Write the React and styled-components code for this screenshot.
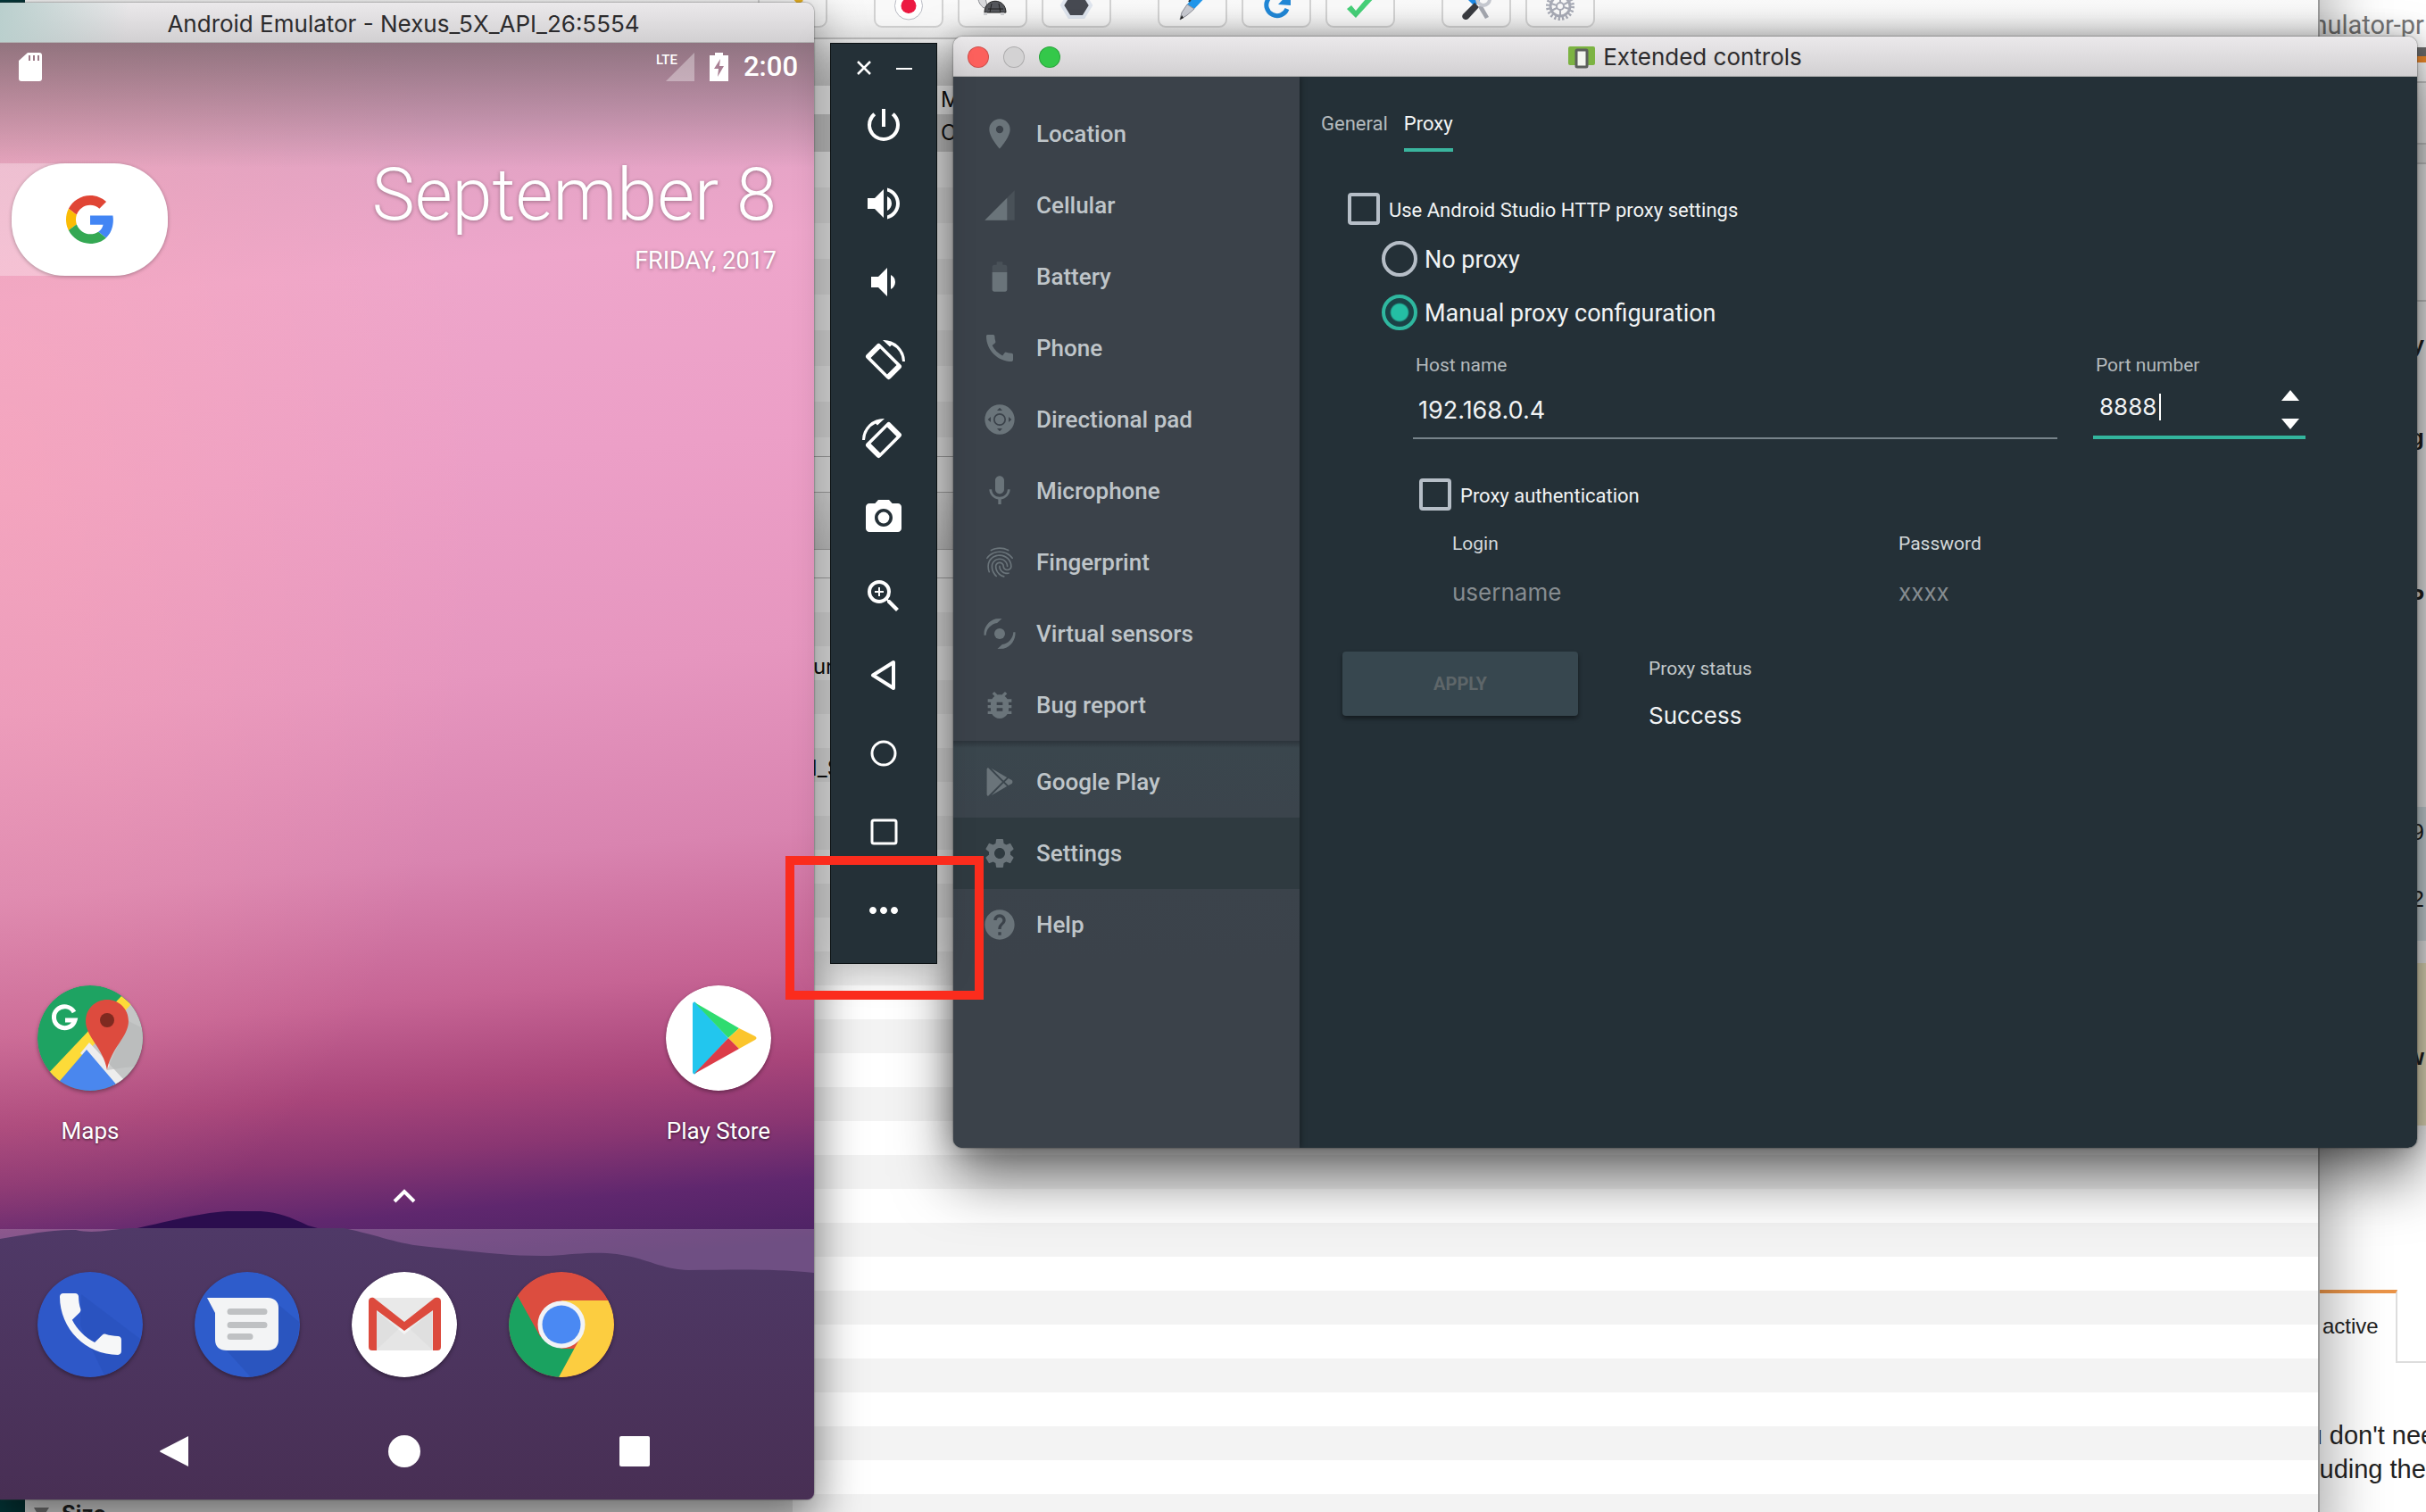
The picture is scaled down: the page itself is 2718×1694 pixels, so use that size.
import React, { useState } from 'react';
import styled, { createGlobalStyle, css } from 'styled-components';
import {
  MdPowerSettingsNew,
  MdVolumeUp,
  MdVolumeDown,
  MdPhotoCamera,
  MdZoomIn,
  MdMoreHoriz,
  MdPlace,
  MdCall,
  MdMic,
  MdFingerprint,
  MdBugReport,
  MdSettings,
  MdHelp,
} from 'react-icons/md';
import { FaGooglePlay } from 'react-icons/fa';

/* ---------- icons ---------- */

const CellularIcon = () => (
  <svg viewBox="0 0 24 24" fill="currentColor">
    <path fillOpacity=".3" d="M2 22h20V2z" />
    <path d="M17 7L2 22h15z" />
  </svg>
);

const BatteryIcon = () => (
  <svg viewBox="0 0 24 24" fill="currentColor">
    <path fillOpacity=".3" d="M17 5.33C17 4.6 16.4 4 15.67 4H14V2h-4v2H8.33C7.6 4 7 4.6 7 5.33V9h10V5.33z" />
    <path d="M7 9v11.67C7 21.4 7.6 22 8.33 22h7.33c.74 0 1.34-.6 1.34-1.33V9H7z" />
  </svg>
);

const DpadIcon = () => (
  <svg viewBox="0 0 24 24" fill="currentColor">
    <path
      fillRule="evenodd"
      d="M12 2a10 10 0 1 0 0 20 10 10 0 0 0 0-20zM12 4l1.800 2h-3.600zM12 20l-1.800-2h3.600zM4 12l2-1.800v3.600zM20 12l-2 1.800v-3.600zM12 7.800a4.200 4.200 0 1 1 0 8.400 4.200 4.200 0 0 1 0-8.400z"
    />
    <circle cx="12" cy="12" r="3.2" />
  </svg>
);

const SensorsIcon = () => (
  <svg viewBox="0 0 24 24" fill="currentColor">
    <circle cx="12" cy="12" r="3.6" />
    <path d="M1.500 13A10.500 10.500 0 0 1 9.500 2l4-.2-3.200 3A8.800 8.800 0 0 0 2.800 13z" />
    <path d="M22.500 11a10.500 10.500 0 0 1-8 11l-4 .2 3.200-3a8.800 8.800 0 0 0 7.500-8.200z" />
  </svg>
);

const RotateIcon = ({ flip }) => (
  <svg viewBox="0 0 48 48" fill="#fff">
    <g transform={flip ? 'translate(48 0) scale(-1 1)' : undefined}>
      <path
        transform="rotate(-45 24 25)"
        fillRule="evenodd"
        d="M16 6h16a3 3 0 0 1 3 3v32a3 3 0 0 1-3 3H16a3 3 0 0 1-3-3V9a3 3 0 0 1 3-3zM16.500 12v26h15V12z"
      />
      <path d="M23 1a24 24 0 0 1 25 24h-3A21 21 0 0 0 33 6.500l-2 2z" />
    </g>
  </svg>
);

const BackIcon = () => (
  <svg viewBox="0 0 48 48" fill="none" stroke="#fff" strokeWidth="4" strokeLinejoin="round">
    <path d="M35 10v29L12 24.500z" />
  </svg>
);

const HomeIcon = () => (
  <svg viewBox="0 0 48 48" fill="none" stroke="#fff" strokeWidth="3">
    <circle cx="24" cy="24" r="13" />
  </svg>
);

const OverviewIcon = () => (
  <svg viewBox="0 0 48 48" fill="none" stroke="#fff" strokeWidth="3">
    <rect x="11" y="11" width="27" height="26" rx="2" />
  </svg>
);

const GoogleLogo = () => (
  <svg width="54" height="54" viewBox="0 0 48 48">
    <path fill="#e04535" d="M24 9.500c3.540 0 6.710 1.220 9.210 3.600l6.850-6.850C35.900 2.380 30.470 0 24 0 14.620 0 6.510 5.380 2.560 13.220l7.980 6.190C12.430 13.720 17.740 9.500 24 9.500z" />
    <path fill="#4285f4" d="M46.980 24.550c0-1.570-.15-3.090-.38-4.550H24v9.020h12.940c-.58 2.960-2.260 5.480-4.780 7.180l7.730 6c4.510-4.180 7.090-10.360 7.090-17.650z" />
    <path fill="#fbbc05" d="M10.530 28.590c-.48-1.450-.76-2.990-.76-4.590s.27-3.140.76-4.590l-7.980-6.190C.92 16.460 0 20.120 0 24c0 3.880.92 7.540 2.560 10.780l7.970-6.190z" />
    <path fill="#34a853" d="M24 48c6.480 0 11.930-2.130 15.890-5.810l-7.730-6c-2.150 1.450-4.920 2.300-8.160 2.300-6.260 0-11.570-4.220-13.470-9.910l-7.980 6.190C6.510 42.620 14.620 48 24 48z" />
  </svg>
);

const MapsLogo = () => (
  <svg viewBox="0 0 118 118">
    <clipPath id="maps-clip">
      <circle cx="59" cy="59" r="59" />
    </clipPath>
    <g clipPath="url(#maps-clip)">
      <rect width="118" height="118" fill="#1ea362" />
      <path d="M118 10v108H96L54 70 98 22z" fill="#c4c6c6" />
      <path d="M94 12l11 9-85 92-12-10z" fill="#fddb38" />
      <path d="M48 76l10-12 52 56H94z" fill="#ededed" />
      <path d="M55 72l41 48H14z" fill="#4a87ee" />
      <path d="M78 95L102 40l20 10v40l-24 2z" fill="#b5b7b8" opacity=".6" />
      <path d="M78 16c13 0 24 10 24 24 0 18-20 30-24 55-4-25-24-37-24-55 0-14 11-24 24-24z" fill="#dd4b3e" />
      <circle cx="78" cy="39" r="8" fill="#7f2a20" />
      <path d="M41 30a12 12 0 1 0 1 9H31" fill="none" stroke="#fff" strokeWidth="5" />
    </g>
  </svg>
);

const PlayLogo = () => (
  <svg viewBox="0 0 118 118">
    <circle cx="59" cy="59" r="59" fill="#fff" />
    <path d="M30 21c0-2 2-3 3-2l37 40-37 40c-1 1-3 0-3-2z" fill="#22c6ee" />
    <path d="M32 19l50 29-12 11z" fill="#2fdc70" />
    <path d="M82 48l18 9c2 1 2 3 0 4L82 71 70 59z" fill="#fbc52c" />
    <path d="M32 99l50-28-12-12z" fill="#dc3c48" />
  </svg>
);

const PhoneLogo = () => (
  <svg viewBox="0 0 118 118">
    <circle cx="59" cy="59" r="59" fill="#2e58c8" />
    <path d="M49 25l66 50a59 59 0 0 1-40 41L48 60z" fill="#264db4" opacity=".4" />
    <path
      transform="translate(13.500 12.500) scale(3.830)"
      fill="#f6f7f8"
      d="M6.620 10.790c1.440 2.830 3.760 5.140 6.590 6.590l2.200-2.200c.27-.27.67-.36 1.020-.24 1.120.37 2.330.57 3.570.57.55 0 1 .45 1 1V20c0 .55-.45 1-1 1-9.390 0-17-7.610-17-17 0-.55.45-1 1-1h3.500c.55 0 1 .45 1 1 0 1.250.2 2.450.57 3.570.11.35.03.74-.25 1.020l-2.200 2.200z"
    />
  </svg>
);

const MessagesLogo = () => (
  <svg viewBox="0 0 118 118">
    <circle cx="59" cy="59" r="59" fill="#2e5ccb" />
    <path d="M93 36l24 20a59 59 0 0 1-54 62L34 86z" fill="#264db4" opacity=".5" />
    <path d="M14 29h68c8 0 12 5 12 11v36c0 7-4 12-12 12H36c-8 0-13-4-13-12V46z" fill="#f3f4f5" />
    <path d="M40 44.500h38M40 59.500h38M40 72.500h22" stroke="#bfc1c3" strokeWidth="7" strokeLinecap="round" />
  </svg>
);

const GmailLogo = () => (
  <svg viewBox="0 0 118 118">
    <circle cx="59" cy="59" r="59" fill="#fff" />
    <rect x="19" y="29" width="81" height="59" rx="4" fill="#e9e9e9" />
    <path d="M27 88l32-30 32 30z" fill="#f4f4f4" />
    <path d="M28 44l31 26 31-26v44H28z" fill="#d5d5d5" opacity=".5" />
    <path d="M19 33c0-5 5-5 7-3l33 26 33-26c2-2 8-2 8 3v51c0 3-2 4-4 4h-5V43L59 66 28 43v45h-5c-2 0-4-1-4-4z" fill="#dc4a3d" />
  </svg>
);

const ChromeLogo = () => (
  <svg viewBox="0 0 118 118">
    <clipPath id="chrome-clip">
      <circle cx="59" cy="59" r="59" />
    </clipPath>
    <g clipPath="url(#chrome-clip)">
      <rect width="118" height="118" fill="#dc4d3f" />
      <path d="M0 10l10 17 25 45 24 14 18 0-21 36H0z" fill="#1aa260" />
      <path d="M59 32h59v86H56l25-46z" fill="#fccd40" />
    </g>
    <circle cx="59" cy="59" r="26.500" fill="#f1f3f6" />
    <circle cx="59" cy="59" r="21.500" fill="#4a89f3" />
  </svg>
);

const SdIcon = () => (
  <svg width="26" height="32" viewBox="0 0 26 32">
    <path d="M10 0h13a3 3 0 0 1 3 3v26a3 3 0 0 1-3 3H3a3 3 0 0 1-3-3V9z" fill="#fff" />
    <path d="M12 3v6M17 3v6M22 3v6" stroke="#9d7b88" strokeWidth="2" />
  </svg>
);

const SignalIcon = () => (
  <svg width="32" height="32" viewBox="0 0 32 32">
    <path d="M0 32L32 0v32z" fill="#fff" fillOpacity=".35" />
  </svg>
);

const ChargeIcon = () => (
  <svg width="21" height="32" viewBox="0 0 21 32">
    <path d="M6 0h9v3h6v29H0V3h6z" fill="#fff" />
    <path d="M12 7L5 18h5l-1 9 7-12h-5z" fill="#a98094" />
  </svg>
);

const Ridge = () => (
  <svg width="100%" height="323" viewBox="0 0 912 323" preserveAspectRatio="none">
    <defs>
      <linearGradient id="ridge" x1="0" y1="0" x2="0" y2="1">
        <stop offset="0" stopColor="#4f3967" />
        <stop offset=".5" stopColor="#4c345e" />
        <stop offset="1" stopColor="#482f54" />
      </linearGradient>
    </defs>
    <path d="M130 24C180 14 220 2 255 0c50-2 60 2 90 16l50 14z" fill="#2b0d4e" />
    <path d="M0 20h912v303H0z" fill="#fff" fillOpacity=".2" />
    <path
      d="M0 31C30 26 60 20 85 21c20 5 40-1 60-2h240c40 8 60 18 96 21 50 5 90 11 135 10 30-2 50-5 75-2 35 5 50 17 80 18 50 0 90-2 141 3v254H0z"
      fill="url(#ridge)"
    />
  </svg>
);

const toolbarDrawings = {
  broom: (
    <path d="M16 0l16 16-6 4L12 4z" fill="#e8b020" />
  ),
  record: (
    <>
      <circle cx="20" cy="21.500" r="15.500" fill="#fff" stroke="#b9bbc4" />
      <circle cx="20" cy="21.500" r="8.500" fill="#ec1941" />
    </>
  ),
  turtle: (
    <>
      <path d="M4 13c0-4 8-4 8 0l2 9-4 2c-3-3-6-6-6-11z" fill="#d9dadd" stroke="#8b8d92" />
      <path d="M11 29c0-17 24-17 24 0z" fill="#55575c" stroke="#222" />
      <path d="M15 25h17M19 19l-2 10M27 19l2 10" stroke="#222" />
      <path d="M12 29v3M31 29v3" stroke="#cfd0d3" strokeWidth="4" />
    </>
  ),
  hexagon: (
    <path d="M12 9h16l8 13-8 13H12L4 22z" transform="translate(0 -1)" fill="#474a52" stroke="#dfe5ee" strokeWidth="4" />
  ),
  pen: (
    <>
      <path d="M30 0l10 6-18 19-8-5z" fill="#2196ea" />
      <path d="M14 20l8 5-8 7-8 5 2-8z" fill="#c9cbd2" stroke="#8d8f98" />
      <path d="M6 37l2-5 2 3z" fill="#222" />
      <path d="M16 17l8-11" stroke="#333" strokeWidth="2" />
    </>
  ),
  refresh: (
    <>
      <path d="M28 12a12 12 0 1 0 4 14" fill="none" stroke="#2187d6" strokeWidth="5" transform="translate(0 -1)" />
      <path d="M22 20l14 1V5z" fill="#2187d6" />
    </>
  ),
  check: (
    <path d="M5 25l5-4 5 6L32 7l5 4-22 24z" fill="#46cf78" />
  ),
  tools: (
    <>
      <path d="M6 2l8 2 10 12-6 6L6 10z" fill="#1d8ae8" />
      <path d="M18 18l5 5-12 13c-3 3-9-1-6-5z" fill="#3a3c41" />
      <path d="M26 20l8 14-4 2-8-13z" fill="#a5a8b0" />
      <circle cx="28" cy="14" r="7" fill="none" stroke="#c5c8cf" strokeWidth="4" />
    </>
  ),
  gear: (
    <g fill="none" stroke="#a8abb6">
      <circle cx="20" cy="22" r="14" strokeWidth="4" strokeDasharray="2.200 2.200" />
      <circle cx="20" cy="22" r="11" strokeWidth="3" />
      <circle cx="20" cy="22" r="4" strokeWidth="2" />
      <path d="M20 12v6M20 26v6M10 19l6 2M24 23l6 2M30 17l-6 3M10 27l6-3" strokeWidth="2" />
    </g>
  ),
};

/* ---------- data ---------- */

const proxyToolGroups = [
  [['Clear', 'broom']],
  [['Record', 'record'], ['Throttle', 'turtle'], ['Breakpoints', 'hexagon']],
  [['Compose', 'pen'], ['Repeat', 'refresh'], ['Validate', 'check']],
  [['Tools', 'tools'], ['Preferences', 'gear']],
];

const emulatorTools = [
  ['Power', <MdPowerSettingsNew />],
  ['Volume up', <MdVolumeUp />],
  ['Volume down', <MdVolumeDown />],
  ['Rotate left', <RotateIcon />],
  ['Rotate right', <RotateIcon flip />],
  ['Take screenshot', <MdPhotoCamera />],
  ['Zoom', <MdZoomIn />],
  ['Back', <BackIcon />],
  ['Home', <HomeIcon />],
  ['Overview', <OverviewIcon />],
  ['More', <MdMoreHoriz />],
];

const deviceSections = [
  ['Location', <MdPlace />],
  ['Cellular', <CellularIcon />],
  ['Battery', <BatteryIcon />],
  ['Phone', <MdCall />],
  ['Directional pad', <DpadIcon />],
  ['Microphone', <MdMic />],
  ['Fingerprint', <MdFingerprint />],
  ['Virtual sensors', <SensorsIcon />],
  ['Bug report', <MdBugReport />],
];

const appSections = [
  ['Google Play', <FaGooglePlay />],
  ['Settings', <MdSettings />],
  ['Help', <MdHelp />],
];

const dockApps = [
  ['Phone', <PhoneLogo />],
  ['Messages', <MessagesLogo />],
  ['Gmail', <GmailLogo />],
  ['Chrome', <ChromeLogo />],
];

/* ---------- windows ---------- */

const BrowserWindow = () => (
  <Browser>
    <BrowserTitle>mulator-pr</BrowserTitle>
    <BrowserBand h={10} color="#6b6b6b" />
    <BrowserBand h={7} color="#f08a2c" />
    <BrowserBand h={23} color="#fff" line />
    <BrowserBand h={69} color="#f4f4f4" line />
    <BrowserBand h={22} color="#e8e8e8" line />
    <BrowserBand h={154} color="#f6f6f6" line />
    <BrowserBand h={96} color="#f6f6f6"><b>y</b></BrowserBand>
    <BrowserBand h={112} color="#f6f6f6"><b>ng</b></BrowserBand>
    <BrowserBand h={246} color="#f6f6f6"><b>P</b></BrowserBand>
    <BrowserBand h={112} color="#f6f6f6" />
    <BrowserBand h={56} color="#d3dfe3">9</BrowserBand>
    <BrowserBand h={94} color="#d3dfe3">2</BrowserBand>
    <BrowserBand h={25} color="#f6f6f6" />
    <BrowserBand h={28} color="#efe7c4" />
    <BrowserBand h={154} color="#efe7c4"><b>w</b></BrowserBand>
    <BrowserBand h={184} color="#fff" />
    <TabStrip>
      <BrowserTab href="#active">active</BrowserTab>
      <TabRest />
    </TabStrip>
    <Answer>
      you don&apos;t nee
      <br />
      including the
    </Answer>
  </Browser>
);

const ProxyWindow = () => (
  <Charles>
    <CharlesToolbar>
      {proxyToolGroups.map(group => (
        <ToolGroup key={group[0][0]}>
          {group.map(([name, icon]) => (
            <ToolButton key={name} type="button" aria-label={name}>
              <svg width="40" height="40" viewBox="0 0 40 40">
                {toolbarDrawings[icon]}
              </svg>
            </ToolButton>
          ))}
        </ToolGroup>
      ))}
    </CharlesToolbar>
    <CharlesBody>
      <Details>
        <DetailRow>
          <svg width="17" height="14" viewBox="0 0 17 14">
            <path d="M0 0h17L8 14z" fill="#777" />
          </svg>
          Size
        </DetailRow>
      </Details>
      <Sessions>
        <PaneHeader h={52} />
        <PaneRow h={32} inset>M</PaneRow>
        <PaneRow h={42} inset selected>C</PaneRow>
        <Stripes h={341} period={80} />
        <PaneRow h={41} lined />
        <PaneHeader h={63} />
        <PaneRow h={33} lined />
        <Stripes grow period={76}>
          <StripeText top={80} left={16}>.ur</StripeText>
          <StripeText top={76} left={6}>M_S</StripeText>
        </Stripes>
      </Sessions>
    </CharlesBody>
  </Charles>
);

const PhoneWindow = () => (
  <Phone>
    <PhoneTitle>Android Emulator - Nexus_5X_API_26:5554</PhoneTitle>
    <Screen>
      <Wallpaper><Ridge /></Wallpaper>
      <StatusBar>
        <SdIcon />
        <StatusRight>
          <Network>
            <span>LTE</span>
            <SignalIcon />
          </Network>
          <ChargeIcon />
          <Clock>2:00</Clock>
        </StatusRight>
      </StatusBar>
      <HomeHeader>
        <SearchTray>
          <SearchPill type="button" aria-label="Google search"><GoogleLogo /></SearchPill>
        </SearchTray>
        <DateBlock>
          <DateText>September 8</DateText>
          <DayText>FRIDAY, 2017</DayText>
        </DateBlock>
      </HomeHeader>
      <AppGrid>
        <App type="button">
          <MapsLogo />
          Maps
        </App>
        <App type="button" last>
          <PlayLogo />
          Play Store
        </App>
      </AppGrid>
      <Drawer type="button" aria-label="All apps">
        <svg width="26" height="16" viewBox="0 0 26 16">
          <path d="M2 14L13 3l11 11" fill="none" stroke="#fff" strokeWidth="4" />
        </svg>
      </Drawer>
      <AppGrid>
        {dockApps.map(([name, logo]) => (
          <App key={name} type="button" aria-label={name}>{logo}</App>
        ))}
      </AppGrid>
      <NavBar>
        <NavButton type="button" aria-label="Back">
          <svg width="36" height="38" viewBox="0 0 36 38">
            <path d="M34 2v34L3 20q-2-1 0-2z" fill="#fff" />
          </svg>
        </NavButton>
        <NavButton type="button" aria-label="Home">
          <svg width="36" height="38" viewBox="0 0 36 38">
            <circle cx="18" cy="19" r="18" fill="#fff" />
          </svg>
        </NavButton>
        <NavButton type="button" aria-label="Overview">
          <svg width="36" height="38" viewBox="0 0 36 38">
            <rect x="1" y="2" width="34" height="34" rx="2" fill="#fff" />
          </svg>
        </NavButton>
      </NavBar>
    </Screen>
  </Phone>
);

const EmulatorToolbar = () => (
  <ToolPalette>
    <PaletteHead>
      <PaletteControl type="button" aria-label="Close">
        <svg width="16" height="16" viewBox="0 0 16 16">
          <path d="M1 1l14 14M15 1L1 15" stroke="#fff" strokeWidth="2.500" />
        </svg>
      </PaletteControl>
      <PaletteControl type="button" aria-label="Minimize">
        <svg width="18" height="16" viewBox="0 0 18 16">
          <path d="M0 9h18" stroke="#fff" strokeWidth="2" />
        </svg>
      </PaletteControl>
    </PaletteHead>
    {emulatorTools.map(([name, icon]) => (
      <PaletteButton key={name} type="button" aria-label={name}>{icon}</PaletteButton>
    ))}
  </ToolPalette>
);

const ProxySettings = () => {
  const [useStudio, setUseStudio] = useState(false);
  const [mode, setMode] = useState('manual');
  const [auth, setAuth] = useState(false);
  const [host, setHost] = useState('192.168.0.4');
  const [port, setPort] = useState('8888');
  const step = by => setPort(String(Number(port) + by));

  return (
    <ProxyForm>
      <Choice small>
        <Checkbox checked={useStudio} onChange={() => setUseStudio(!useStudio)} />
        <span>Use Android Studio HTTP proxy settings</span>
      </Choice>
      <RadioGroup>
        <Choice>
          <Radio name="mode" checked={mode === 'none'} onChange={() => setMode('none')} />
          <span>No proxy</span>
        </Choice>
        <Choice>
          <Radio name="mode" checked={mode === 'manual'} onChange={() => setMode('manual')} />
          <span>Manual proxy configuration</span>
        </Choice>
      </RadioGroup>
      <HostRow>
        <Field grow>
          <FieldLabel htmlFor="host">Host name</FieldLabel>
          <HostBox>
            <TextInput id="host" value={host} onChange={e => setHost(e.target.value)} />
          </HostBox>
        </Field>
        <Field>
          <FieldLabel htmlFor="port">Port number</FieldLabel>
          <PortBox>
            <PortInput
              id="port"
              inputMode="numeric"
              value={port}
              onChange={e => setPort(e.target.value)}
            />
            <Caret />
            <Spinner>
              <SpinButton type="button" aria-label="Increase" onClick={() => step(1)}>
                <svg width="20" height="12" viewBox="0 0 20 12"><path d="M10 0l10 12H0z" fill="#fff" /></svg>
              </SpinButton>
              <SpinButton type="button" aria-label="Decrease" onClick={() => step(-1)}>
                <svg width="20" height="12" viewBox="0 0 20 12"><path d="M10 12L0 0h20z" fill="#fff" /></svg>
              </SpinButton>
            </Spinner>
          </PortBox>
        </Field>
      </HostRow>
      <AuthBlock>
        <Choice small>
          <Checkbox checked={auth} onChange={() => setAuth(!auth)} />
          <span>Proxy authentication</span>
        </Choice>
        <AuthFields>
          <Field grow>
            <FieldLabel bright htmlFor="login">Login</FieldLabel>
            <TextInput id="login" placeholder="username" disabled={!auth} />
          </Field>
          <Field grow>
            <FieldLabel bright htmlFor="password">Password</FieldLabel>
            <TextInput id="password" placeholder="xxxx" disabled={!auth} />
          </Field>
        </AuthFields>
      </AuthBlock>
      <ApplyRow>
        <ApplyButton type="button" disabled>APPLY</ApplyButton>
        <Status>
          <StatusLabel>Proxy status</StatusLabel>
          <StatusValue>Success</StatusValue>
        </Status>
      </ApplyRow>
    </ProxyForm>
  );
};

const SectionList = ({ items, active }) =>
  items.map(([name, icon]) => (
    <Section key={name} href={`#${name}`} active={name === active}>
      <SectionIcon small={name === 'Google Play'}>{icon}</SectionIcon>
      {name}
    </Section>
  ));

const ControlsWindow = () => (
  <Controls>
    <ControlsTitle>
      <Lights>
        <Light type="button" aria-label="Close" color="#fc605c" />
        <Light type="button" aria-label="Minimize" color="#d3d2d3" />
        <Light type="button" aria-label="Zoom" color="#34c84a" />
      </Lights>
      <TitleText>
        <svg width="30" height="26" viewBox="0 0 30 26">
          <rect width="30" height="21" y="1" rx="2" fill="#7cb342" />
          <rect x="9" y="5" width="12" height="19" rx="1" fill="#f3f5ef" stroke="#5c5f5c" strokeWidth="3" />
        </svg>
        Extended controls
      </TitleText>
    </ControlsTitle>
    <ControlsBody>
      <Sidebar>
        <SectionList items={deviceSections} />
        <LowerSections>
          <SectionList items={appSections} active="Settings" />
        </LowerSections>
      </Sidebar>
      <Panel>
        <Tabs>
          <Tab type="button">General</Tab>
          <Tab type="button" active>Proxy</Tab>
        </Tabs>
        <ProxySettings />
      </Panel>
    </ControlsBody>
  </Controls>
);

const Desktop = () => (
  <Backdrop>
    <GlobalStyle />
    <BrowserWindow />
    <ProxyWindow />
    <PhoneWindow />
    <ControlsWindow />
    <EmulatorToolbar />
    <Highlight />
  </Backdrop>
);

/* ---------- styles ---------- */

const skip = (...names) => ({ shouldForwardProp: prop => !names.includes(prop) });

const GlobalStyle = createGlobalStyle`
  *, *::before, *::after {
    box-sizing: border-box;
  }
  body {
    margin: 0;
    font-family: Roboto, 'Liberation Sans', sans-serif;
  }
  button, input {
    margin: 0;
    padding: 0;
    border: 0;
    background: none;
    color: inherit;
    font: inherit;
  }
`;

const Backdrop = styled.main`
  position: relative;
  height: 100vh;
  overflow: hidden;
  background: #04393b;
`;

const titleBar = css`
  height: 45px;
  background: linear-gradient(#ebe9eb, #d2d0d2);
  border-bottom: 1px solid #b2b2b2;
  color: #2c2b2d;
  font: 26px/46px Inter, 'Liberation Sans', sans-serif;
`;

const Browser = styled.section`
  position: absolute;
  top: 0;
  right: 0;
  bottom: 0;
  width: 318px;
  overflow: hidden;
  background: #fff;
  color: #222;
  font: 29px/38px 'Liberation Sans', Arial, sans-serif;
`;

const BrowserTitle = styled.div`
  height: 53px;
  padding-left: 182px;
  color: #777;
  font: 29px/56px Roboto, sans-serif;
  white-space: nowrap;
`;

const BrowserBand = styled.div.withConfig(skip('h', 'color', 'line'))`
  height: ${props => props.h}px;
  padding-right: 2px;
  background: ${props => props.color};
  ${props => props.line && 'border-bottom: 2px solid #ccc;'}
  font-size: 26px;
  line-height: ${props => props.h}px;
  text-align: right;
`;

const TabStrip = styled.div`
  display: flex;
  height: 82px;
`;

const BrowserTab = styled.a`
  width: 286px;
  padding-left: 202px;
  border-top: 4px solid #ea9448;
  border-right: 2px solid #ddd;
  color: inherit;
  font-size: 24px;
  line-height: 74px;
  text-decoration: none;
`;

const TabRest = styled.div`
  flex: 1;
  border-bottom: 2px solid #ddd;
`;

const Answer = styled.p`
  margin: 62px 0 0;
  padding-left: 155px;
  white-space: nowrap;
`;

const Charles = styled.section`
  position: absolute;
  top: -40px;
  right: 119px;
  bottom: -40px;
  left: 28px;
  display: flex;
  flex-direction: column;
  border-right: 2px solid #9a9a9a;
  background: #fff;
  box-shadow: 10px 10px 60px rgba(0, 0, 0, 0.35);
`;

const CharlesToolbar = styled.header`
  display: flex;
  align-items: flex-end;
  gap: 52px;
  height: 84px;
  padding: 0 0 11px 821px;
  background: linear-gradient(#fafafa 40px, #ececec);
  border-bottom: 2px solid #c2c2c2;
`;

const ToolGroup = styled.div`
  display: flex;
  gap: 16px;
`;

const ToolButton = styled.button`
  display: flex;
  align-items: center;
  justify-content: center;
  width: 78px;
  height: 52px;
  border: 2px solid #d2d2d2;
  border-radius: 9px;
  background: #f9f9f9;
`;

const CharlesBody = styled.div`
  display: flex;
  flex: 1;
  min-height: 0;
`;

const Details = styled.div`
  display: flex;
  align-items: flex-end;
  width: 860px;
  background: #ddd;
`;

const DetailRow = styled.div`
  display: flex;
  align-items: center;
  gap: 14px;
  padding: 0 0 16px 10px;
  color: #222;
  font: bold 24px/44px Inter, sans-serif;
`;

const Sessions = styled.div`
  display: flex;
  flex: 1;
  flex-direction: column;
  color: #111;
  font: 24px/32px Inter, sans-serif;
`;

const PaneHeader = styled.div.withConfig(skip('h'))`
  height: ${props => props.h}px;
  background: linear-gradient(#f4f4f4, #dadada);
`;

const PaneRow = styled.div.withConfig(skip('h', 'inset', 'selected', 'lined'))`
  height: ${props => props.h}px;
  padding-left: ${props => (props.inset ? 166 : 24)}px;
  background: ${props => (props.selected ? '#d4d4d4' : '#fff')};
  line-height: ${props => props.h}px;
  ${props =>
    props.lined &&
    css`
      border-top: 1px solid #b5b5b5;
      border-bottom: 1px solid #b5b5b5;
    `}
`;

const Stripes = styled.div.withConfig(skip('h', 'grow', 'period'))`
  ${props => (props.grow ? 'flex: 1;' : `height: ${props.h}px;`)}
  background: repeating-linear-gradient(
    #fff 0 ${props => props.period / 2}px,
    #f3f3f3 ${props => props.period / 2}px ${props => props.period}px
  );
`;

const StripeText = styled.div.withConfig(skip('top', 'left'))`
  padding: ${props => props.top}px 0 0 ${props => props.left}px;
  line-height: 38px;
`;

const Phone = styled.section`
  position: absolute;
  top: 3px;
  bottom: 14px;
  left: 0;
  display: flex;
  flex-direction: column;
  width: 912px;
  border-radius: 0 10px 8px 0;
  box-shadow: 0 20px 50px 4px rgba(0, 0, 0, 0.5), 0 0 2px #555;
`;

const PhoneTitle = styled.header`
  ${titleBar};
  padding-right: 8px;
  border-radius: 0 10px 0 0;
  background: linear-gradient(100deg, #b9cfcd, rgba(220, 222, 222, 0) 16%), linear-gradient(#ebe9eb, #d2d0d2);
  text-align: center;
  line-height: 48px;
`;

const Screen = styled.div`
  position: relative;
  display: flex;
  flex: 1;
  flex-direction: column;
  min-height: 0;
  overflow: hidden;
  border-radius: 0 0 8px 0;
  background: linear-gradient(rgba(80, 80, 80, 0.55), rgba(80, 80, 80, 0) 140px),
    radial-gradient(ellipse 60% 55% at 0 30%, rgba(255, 172, 176, 0.4), rgba(255, 172, 176, 0)),
    linear-gradient(
      175deg,
      #dc9cb8 0%,
      #dfa2c2 8%,
      #eea6cb 17%,
      #ec9fc7 30%,
      #e696bf 44%,
      #d984b0 56%,
      #c66494 65%,
      #a8457a 71%,
      #8a3672 75%,
      #5f276e 79%,
      #4c2364 83%
    );
  color: #fff;
`;

const Wallpaper = styled.div`
  position: absolute;
  inset: auto 0 0;
  display: flex;
`;

const StatusBar = styled.div`
  position: relative;
  display: flex;
  align-items: center;
  justify-content: space-between;
  height: 54px;
  padding: 0 18px 0 21px;
`;

const StatusRight = styled.div`
  display: flex;
  align-items: center;
  gap: 17px;
`;

const Network = styled.div`
  display: flex;
  align-items: flex-start;

  span {
    margin-right: -13px;
    font: 500 15px/17px Roboto, sans-serif;
  }
`;

const Clock = styled.span`
  font: 500 31px/32px Roboto, sans-serif;
`;

const HomeHeader = styled.div`
  position: relative;
  display: flex;
  flex: 1;
  align-items: flex-start;
  justify-content: space-between;
  padding: 81px 42px 0 0;
`;

const SearchTray = styled.div`
  padding-left: 13px;
  background: linear-gradient(90deg, rgba(255, 255, 255, 0.3) 70px, transparent 70px);
`;

const SearchPill = styled.button`
  display: flex;
  align-items: center;
  justify-content: center;
  width: 175px;
  height: 126px;
  border-radius: 60px;
  background: #fff;
  box-shadow: 0 1px 4px rgba(0, 0, 0, 0.3);
`;

const DateBlock = styled.div`
  text-align: right;
  text-shadow: 0 1px 4px rgba(0, 0, 0, 0.35);
`;

const DateText = styled.div`
  font: 300 81px/72px Roboto, sans-serif;
`;

const DayText = styled.div`
  margin-top: 21px;
  font: 27px/32px Roboto, sans-serif;
`;

const AppGrid = styled.div`
  position: relative;
  display: grid;
  grid-template-columns: repeat(5, 1fr);
  padding: 0 19px 0 13px;
`;

const App = styled.button.withConfig(skip('last'))`
  display: flex;
  flex-direction: column;
  align-items: center;
  gap: 25px;
  ${props => props.last && 'grid-column: 5;'}
  font-size: 26px;
  line-height: 40px;
  text-shadow: 0 1px 3px rgba(0, 0, 0, 0.6);
  white-space: nowrap;

  svg {
    width: 118px;
    height: 118px;
    border-radius: 50%;
    box-shadow: 0 2px 4px rgba(0, 0, 0, 0.35);
  }
`;

const Drawer = styled.button`
  position: relative;
  display: flex;
  justify-content: center;
  padding: 45px 6px 77px 0;
`;

const NavBar = styled.nav`
  position: relative;
  display: flex;
  align-items: center;
  justify-content: center;
  gap: 222px;
  height: 108px;
  margin-top: 29px;
  padding-right: 6px;
`;

const NavButton = styled.button`
  display: flex;
`;

const ToolPalette = styled.aside`
  position: absolute;
  top: 48px;
  left: 930px;
  width: 120px;
  padding-bottom: 15px;
  border: 1px solid #0b1113;
  background: #243037;
  box-shadow: 0 6px 40px rgba(0, 0, 0, 0.25);
`;

const PaletteHead = styled.div`
  display: flex;
  align-items: center;
  justify-content: space-between;
  height: 47px;
  padding: 7px 27px 0 29px;
`;

const PaletteControl = styled.button`
  display: flex;
`;

const PaletteButton = styled.button`
  display: flex;
  align-items: center;
  justify-content: center;
  width: 100%;
  height: 88px;
  color: #fff;

  svg {
    width: 48px;
    height: 48px;
  }
`;

const Controls = styled.section`
  position: absolute;
  top: 41px;
  right: 10px;
  left: 1068px;
  display: flex;
  flex-direction: column;
  border-radius: 10px;
  box-shadow: 0 34px 64px rgba(0, 0, 0, 0.55), 0 0 30px rgba(0, 0, 0, 0.3), 0 0 2px #555;
`;

const ControlsTitle = styled.header`
  ${titleBar};
  display: grid;
  grid-template-columns: 1fr auto 1fr;
  align-items: center;
  padding: 0 16px;
  border-radius: 10px 10px 0 0;
`;

const Lights = styled.div`
  display: flex;
  gap: 16px;
`;

const Light = styled.button.withConfig(skip('color'))`
  width: 24px;
  height: 24px;
  border: 1px solid rgba(0, 0, 0, 0.18);
  border-radius: 50%;
  background: ${props => props.color};
`;

const TitleText = styled.h1`
  display: flex;
  align-items: center;
  gap: 9px;
  margin: 0;
  font: inherit;
`;

const ControlsBody = styled.div`
  display: flex;
  height: 1200px;
  overflow: hidden;
  border-radius: 0 0 10px 10px;
  background: #243037;
`;

const Sidebar = styled.nav`
  width: 388px;
  padding-top: 24px;
  background: #3b424a;
  box-shadow: 2px 0 6px rgba(0, 0, 0, 0.3);
`;

const LowerSections = styled.div`
  padding-top: 6px;
  background: linear-gradient(#2c343b, #3a464d 8px, #3b444c 80px, #3b424a);
`;

const Section = styled.a.withConfig(skip('active'))`
  display: flex;
  align-items: center;
  gap: 21px;
  height: 80px;
  padding-left: 32px;
  background: ${props => (props.active ? '#2f3a40' : 'transparent')};
  color: #bfc5c9;
  font-size: 26px;
  font-weight: 500;
  text-decoration: none;
`;

const SectionIcon = styled.span.withConfig(skip('small'))`
  display: flex;
  justify-content: center;
  width: 40px;
  color: #6a747a;

  svg {
    width: ${props => (props.small ? 32 : 40)}px;
    height: ${props => (props.small ? 32 : 40)}px;
  }
`;

const Panel = styled.div`
  flex: 1;
  color: #f1f3f4;
`;

const Tabs = styled.div`
  display: flex;
  gap: 18px;
  padding: 35px 0 0 24px;
`;

const Tab = styled.button.withConfig(skip('active'))`
  height: 49px;
  padding-bottom: 9px;
  border-bottom: 4px solid ${props => (props.active ? '#3ab59e' : 'transparent')};
  color: ${props => (props.active ? '#f4f6f6' : '#b4babd')};
  font-size: 22px;
  line-height: 36px;
`;

const ProxyForm = styled.form`
  padding: 46px 125px 0 48px;
`;

const Choice = styled.label.withConfig(skip('small'))`
  display: flex;
  align-items: center;
  gap: ${props => (props.small ? 10 : 8)}px;
  padding-left: ${props => (props.small ? 6 : 0)}px;
  font-size: ${props => (props.small ? 22 : 27)}px;
  line-height: 33px;

  span {
    padding-top: 3px;
  }
`;

const Checkbox = styled.input.attrs({ type: 'checkbox' })`
  width: 36px;
  height: 36px;
  border: 4px solid #b6bec7;
  border-radius: 4px;
  appearance: none;
`;

const Radio = styled.input.attrs({ type: 'radio' })`
  width: 40px;
  height: 40px;
  border: 4px solid #b6bec7;
  border-radius: 50%;
  appearance: none;

  &:checked {
    border-color: #2fb79f;
    background: radial-gradient(circle, #24bfa4 9px, #1b4246 11px);
  }
`;

const RadioGroup = styled.div`
  display: flex;
  flex-direction: column;
  gap: 20px;
  padding: 18px 0 0 44px;
`;

const HostRow = styled.div`
  display: flex;
  gap: 40px;
  padding: 26px 0 0 79px;
`;

const Field = styled.div.withConfig(skip('grow'))`
  display: flex;
  flex-direction: column;
  ${props => props.grow && 'flex: 1;'}
`;

const FieldLabel = styled.label.withConfig(skip('bright'))`
  padding-left: ${props => (props.bright ? 0 : 3)}px;
  color: ${props => (props.bright ? '#d3d8da' : '#b4babd')};
  font-size: 21px;
  line-height: 26px;
`;

const HostBox = styled.div`
  display: flex;
  height: 70px;
  padding: 8px 0 0 6px;
  border-bottom: 2px solid #77838a;

  input {
    font-size: 27px;
  }
`;

const TextInput = styled.input`
  width: 100%;
  font: 26px/30px Inter, Roboto, sans-serif;

  &::placeholder {
    color: #868c90;
    opacity: 1;
  }
`;

const PortBox = styled.div`
  display: flex;
  align-items: center;
  width: 238px;
  height: 70px;
  padding: 2px 7px 0;
  border-bottom: 4px solid #33b59d;
`;

const PortInput = styled(TextInput)`
  width: 67px;
`;

const Caret = styled.span`
  width: 2px;
  height: 30px;
  background: #fff;
`;

const Spinner = styled.div`
  display: flex;
  flex-direction: column;
  gap: 20px;
  margin-left: auto;
  padding-top: 6px;
`;

const SpinButton = styled.button`
  display: flex;
`;

const AuthBlock = styled.div`
  padding: 44px 0 0 80px;
`;

const AuthFields = styled.div`
  display: flex;
  gap: 44px;
  padding: 24px 0 0 43px;

  input {
    height: 82px;
  }
`;

const ApplyRow = styled.div`
  display: flex;
  gap: 79px;
  padding-top: 26px;
`;

const ApplyButton = styled.button`
  width: 264px;
  height: 72px;
  border-radius: 4px;
  background: #37474f;
  box-shadow: 0 3px 5px rgba(0, 0, 0, 0.45);
  color: #5e6669;
  font-size: 20px;
  font-weight: 700;
`;

const Status = styled.div`
  padding-top: 6px;
`;

const StatusLabel = styled.div`
  color: #c3c9cb;
  font-size: 21px;
  line-height: 26px;
`;

const StatusValue = styled.div`
  padding-top: 23px;
  font: 26px/34px Inter, Roboto, sans-serif;
`;

const Highlight = styled.div`
  position: absolute;
  top: 959px;
  left: 880px;
  width: 222px;
  height: 161px;
  border: 10px solid #fb2c1d;
  pointer-events: none;
`;

export default Desktop;
